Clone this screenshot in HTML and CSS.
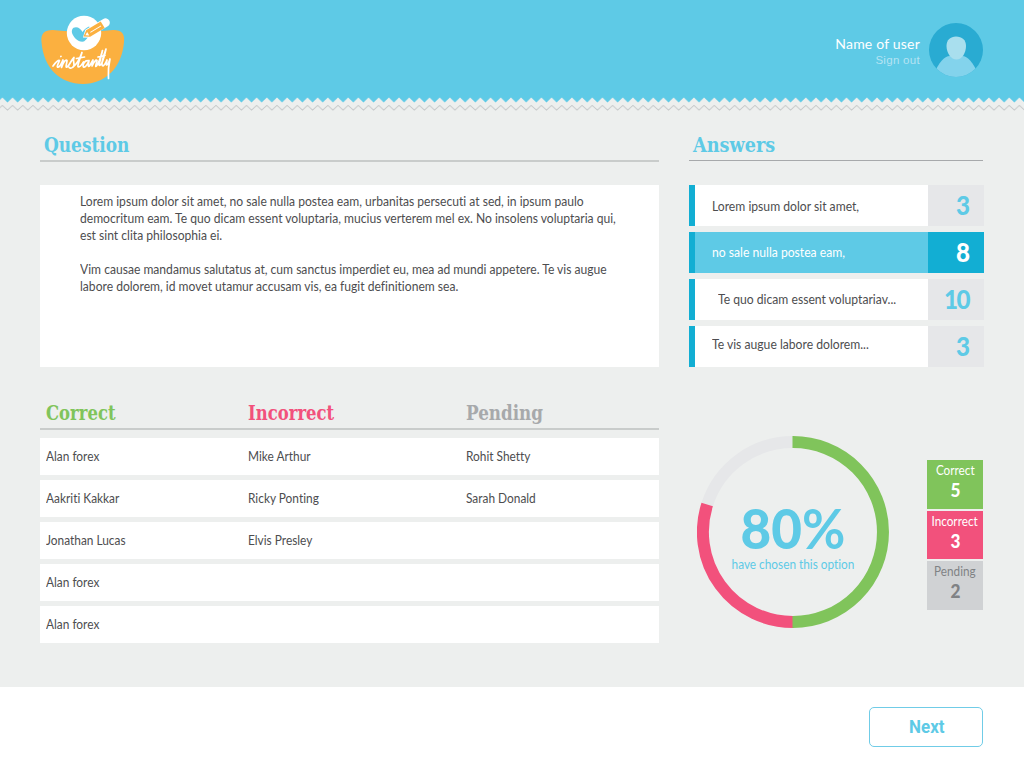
FILE: index.html
```html
<!DOCTYPE html>
<html lang="en">
<head>
<meta charset="utf-8">
<title>instantly – results</title>
<link rel="stylesheet" href="styles.css">
</head>
<body>
<header class="topbar">
  <svg class="logo" width="90" height="74" viewBox="38 12 90 74">
    <path fill="#fbb040" d="M41.500 42C40.500 33 45 29.700 53 29.900C60 30.200 66 31.500 83 31.500C100 31.500 106 30.200 113 29.900C121 29.700 125 33 124 42C122 68 105 84 83 84C60 84 43.500 68 41.500 42Z"/>
    <circle cx="84" cy="33" r="17.200" fill="#fff"/>
    <path fill="#5ecae6" d="M73.500 27.800C77 26 81 28.500 82.500 32C84 29.500 86.500 27.500 89 26.500L95 32.500C89 35 87 39 84 41.500C78 42.500 74 38 72 33C71.500 31 72 29 73.500 27.800Z"/>
    <g transform="translate(83.500 36.500) rotate(-31)">
      <path d="M-1 .5L5-4.800H26a4.300 4.300 0 0 1 0 8.600H4Z" fill="#fff"/>
      <path d="M0 0L5.500-4H22.500V3.700H5.500Z" fill="#fbb040"/>
      <path d="M2.200 0L5.500-2V2Z" fill="#fff"/>
      <path d="M8 0H20.500" fill="none" stroke="#fff" stroke-width=".9"/>
    </g>
    <path fill="none" stroke="#fff" stroke-width="1.700" stroke-linecap="round" stroke-linejoin="round" d="M53 66C56 62 58 60 59.500 60.500C58 64 56 68 58.500 67C60.500 66 62 62 63 60L61.500 67.500C63 62 66 59 67 60.500C67 63 65 68 67 67C70 65 71 60 74 57.500C72 62 76 65 73 67C71 69 69 68 69 67M60.800 56.500L61 56.300M73 67C77 64 80 58 82 52.500C80 59 76.500 67 78.500 67C80.500 67 82 64 83.500 62M76.500 58.500L84.500 57M88.500 61C85.500 59 82 65 83.500 67C86 68 88 63 89 60.500C88 66 88 67 89.500 66C91 64 92 61 93 60L92 66C94 62 96 59 97 60.500C96 65 95 67.500 96.500 66C99 63 101 56 102.500 50.500L99 65C101 67 104 59 106 49C103 57 100.500 66 103 66C105 65 106 62 107 60C106 65 106 66 108 64L110 59C107.500 70 108.500 75 108.500 78.500M98 57L105 55.500"/>
  </svg>
  <div class="user">
    <div class="user-text">
      <div class="user-name">Name of user</div>
      <div class="sign-out">Sign out</div>
    </div>
    <svg width="54" height="54" viewBox="0 0 54 54">
      <defs><clipPath id="round"><circle cx="27" cy="27" r="27"/></clipPath></defs>
      <circle cx="27" cy="27" r="27" fill="#29abd2"/>
      <path clip-path="url(#round)" fill="#83d3ec" d="M5 50C10 40 15 33 21 33H33C39 33 44 40 49 50V54H5Z"/>
      <path fill="#a9dfee" d="M27 13.500C33 13.500 37 17 37 23C37 30 33 36.500 27.500 36.500C22 36.500 17.500 30 17.500 23C17.500 17 21.500 13.500 27 13.500Z"/>
    </svg>
  </div>
</header>
<svg class="zigzag" width="1024" height="16" viewBox="0 0 1024 16">
  <defs>
    <pattern id="teeth" width="10.170" height="16" patternUnits="userSpaceOnUse" patternTransform="translate(2.400 0)">
      <path d="M0 0H10.170V.6L5.090 5.600L0 .6Z" fill="#5ecae6"/>
      <path d="M-1 9.300L0 8.400L5.090 13L10.170 8.400L11.200 9.300" fill="none" stroke="#c5c8c9"/>
    </pattern>
  </defs>
  <rect width="1024" height="16" fill="url(#teeth)"/>
</svg>
<main class="board">
  <section class="left">
    <h2 class="title question-title"><span class="slab">Question</span></h2>
    <div class="question"><p class="copy">Lorem ipsum dolor sit amet, no sale nulla postea eam, urbanitas persecuti at sed, in ipsum paulo<br>democritum eam. Te quo dicam essent voluptaria, mucius verterem mel ex. No insolens voluptaria qui,<br>est sint clita philosophia ei.<br><br>Vim causae mandamus salutatus at, cum sanctus imperdiet eu, mea ad mundi appetere. Te vis augue<br>labore dolorem, id movet utamur accusam vis, ea fugit definitionem sea.</p></div>
    <div class="cols table-head"><h2 class="slab green">Correct</h2><h2 class="slab pink">Incorrect</h2><h2 class="slab grey">Pending</h2></div>
    <div class="rows">
      <div class="cols row"><span class="txt">Alan forex</span><span class="txt">Mike Arthur</span><span class="txt">Rohit Shetty</span></div>
      <div class="cols row"><span class="txt">Aakriti Kakkar</span><span class="txt">Ricky Ponting</span><span class="txt">Sarah Donald</span></div>
      <div class="cols row"><span class="txt">Jonathan Lucas</span><span class="txt">Elvis Presley</span></div>
      <div class="cols row"><span class="txt">Alan forex</span></div>
      <div class="cols row"><span class="txt">Alan forex</span></div>
    </div>
  </section>
  <section class="right">
    <h2 class="title answers-title"><span class="slab">Answers</span></h2>
    <div class="answers">
      <div class="answer first"><span class="txt">Lorem ipsum dolor sit amet,</span><b class="count"><span>3</span></b></div>
      <div class="answer selected"><span class="txt">no sale nulla postea eam,</span><b class="count"><span>8</span></b></div>
      <div class="answer indent"><span class="txt">Te quo dicam essent voluptariav...</span><b class="count"><span class="ten">10</span></b></div>
      <div class="answer last"><span class="txt">Te vis augue labore dolorem...</span><b class="count"><span>3</span></b></div>
    </div>
    <div class="stats">
      <div class="chart">
        <svg class="ring" width="192" height="192" viewBox="0 0 192 192" fill="none" stroke-width="12">
          <path stroke="#e6e7e9" d="M10.200 68.500A90 90 0 0 1 96 6"/>
          <path stroke="#f2517c" d="M96 186A90 90 0 0 1 10.200 68.500"/>
          <path stroke="#80c45b" d="M95.500 6H96A90 90 0 0 1 96 186H95.500"/>
        </svg>
        <div class="chart-label"><div class="percent"><span class="num">80</span><span class="sign">%</span></div><div class="caption">have chosen this option</div></div>
      </div>
      <div class="legend">
        <div class="tile tile-green"><span>Correct</span><b>5</b></div>
        <div class="tile tile-pink"><span>Incorrect</span><b>3</b></div>
        <div class="tile tile-grey"><span>Pending</span><b>2</b></div>
      </div>
    </div>
  </section>
</main>
<footer class="footer"><button class="next"><span>Next</span></button></footer>
</body>
</html>
```
FILE: styles.css
```css
* { box-sizing: border-box; }
body { margin: 0; width: 1024px; height: 768px; overflow: hidden; display: flex; flex-direction: column; background: #edefee; color: #4d4d4f; font-family: Lato, "Open Sans", sans-serif; font-variant-ligatures: none; }
h2, p { margin: 0; }
.topbar { height: 97px; flex: none; background: #5ecae6; display: flex; justify-content: space-between; padding: 12px 41.500px 0 38px; }
.logo { display: block; }
.user { display: flex; gap: 8.500px; padding-top: 11px; }
.user-text { text-align: right; padding-top: 12px; white-space: nowrap; }
.user-name { color: #fff; font-size: 14px; line-height: 17px; letter-spacing: .2px; }
.sign-out { color: #b5e3f3; font: 11.500px/16px "Liberation Sans", sans-serif; letter-spacing: .3px; }
.zigzag { display: block; flex: none; }
.board { height: 574px; flex: none; display: grid; grid-template-columns: 619.400px 296px; column-gap: 29.600px; padding: 0 0 0 40px; }
.slab { display: inline-block; font: bold 19.500px/27px "Roboto Slab", "DejaVu Serif", serif; transform: scaleX(.86); transform-origin: left; white-space: nowrap; }
.title { color: #5ecae6; height: 49px; padding: 17px 4px 0; line-height: 26px; }
.question-title .slab { transform: scaleX(.87); }
.answers-title .slab { transform: scaleX(.905); }
.question-title { border-bottom: 2px solid #c9cccb; }
.answers-title { border-bottom: 1px solid #a7a9ab; width: 294px; height: 48px; }
.question { margin-top: 23px; height: 182px; background: #fff; padding: 8px 0 0 40px; }
.copy, .txt { font-size: 13.500px; white-space: nowrap; transform: scaleX(.88); transform-origin: left; }
.copy { line-height: 16.900px; transform: scaleX(.896); }
.cols { display: grid; grid-template-columns: 202px 218px 1fr; padding-left: 5.500px; }
.table-head { height: 63px; padding-top: 33px; border-bottom: 2px solid #c9cccb; }
.table-head .green, .table-head .pink { transform: scaleX(.845); }
.green { color: #80c45b; }
.pink { color: #f2517c; }
.grey { color: #a7a9ab; }
.rows { margin-top: 8px; display: grid; gap: 5px; }
.row { height: 37px; background: #fff; line-height: 37px; }
.answers { margin-top: 24px; width: 295px; display: grid; gap: 6px; }
.answer { height: 41px; background: #fff; border-left: 6px solid #12aed3; display: grid; grid-template-columns: 1fr 56px; padding-left: 17px; line-height: 41px; }
.answer .txt { transform: scaleX(.9); }
.first .txt { line-height: 43px; }
.last .txt { line-height: 37px; }
.indent { padding-left: 23px; }
.count { height: 41px; line-height: 40px; background: #e6e7e9; color: #5ecae6; font-size: 26px; font-weight: 900; text-align: right; padding-right: 14px; }
.count span { display: inline-block; transform: scaleX(.93); transform-origin: right; }
.count .ten { letter-spacing: -1.500px; padding-right: 1px; }
.selected, .selected .count { color: #fff; }
.selected { background: #5ecae6; }
.selected .count { background: #12aed3; }
.stats { display: flex; padding: 69px 0 0 8px; }
.chart { display: grid; width: 192px; height: 192px; }
.ring, .chart-label { grid-area: 1 / 1; }
.chart-label { text-align: center; color: #5ecae6; padding-top: 64px; white-space: nowrap; }
.percent { font-size: 56px; line-height: 56px; transform: scaleX(.945); }
.num { font-weight: 900; }
.sign { font-weight: 700; }
.caption { font-size: 13.500px; line-height: 16px; transform: scaleX(.875); }
.legend { margin: 24px 0 0 38px; width: 56px; display: grid; gap: 2px; align-content: start; }
.tile { height: 48.500px; color: #fff; display: grid; justify-items: center; padding-top: 2px; grid-template-rows: 17px 23px; white-space: nowrap; }
.tile span { font-size: 13.500px; line-height: 17px; transform: scaleX(.87); }
.tile b { font-size: 18.500px; line-height: 23px; font-weight: 900; transform: scaleX(.93); }
.tile-green { background: #80c45b; }
.tile-pink { background: #f2517c; }
.tile-grey { background: #d0d2d4; color: #808285; }
.footer { flex: 1; background: #fff; display: flex; justify-content: flex-end; padding: 20px 41.500px 0 0; }
.next { width: 114px; height: 40px; padding: 0; border: 1px solid #70cce7; border-radius: 5px; background: #fff; color: #5ecae6; font: bold 19px/38px Roboto, sans-serif; }
.next span { display: inline-block; transform: scaleX(.89) translateX(1px); }
```
